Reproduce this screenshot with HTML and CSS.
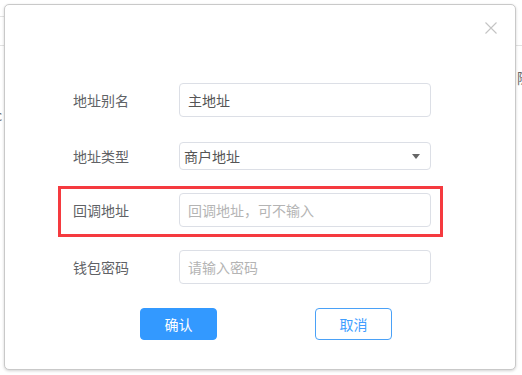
FILE: index.html
```html
<!DOCTYPE html>
<html lang="zh-CN">
<head>
<meta charset="utf-8">
<title>地址设置</title>
<link rel="stylesheet" href="styles.css">
</head>
<body>
<div class="backdrop">
  <div class="bg-line bg-line-a"></div>
  <div class="bg-line bg-line-b"></div>
  <div class="bg-row bg-row-a"><span class="bg-char">随</span></div>
  <div class="bg-row bg-row-b"><span class="bg-char bg-left">c</span></div>
</div>

<div class="dialog">
  <div class="dialog-header">
    <button class="close" aria-label="关闭">
      <svg width="12" height="12" viewBox="0 0 12 12"><path d="M0.5 0.5 L11.5 11.5 M11.5 0.5 L0.5 11.5" stroke="#c4c4c4" stroke-width="1.1" fill="none"/></svg>
    </button>
  </div>
  <div class="form">
    <div class="row">
      <label class="label">地址别名</label>
      <div class="input value">主地址</div>
    </div>
    <div class="row row-select">
      <label class="label">地址类型</label>
      <div class="select"><span class="value">商户地址</span><span class="caret"></span></div>
    </div>
    <div class="highlight">
      <div class="row">
        <label class="label">回调地址</label>
        <div class="input placeholder">回调地址，可不输入</div>
      </div>
    </div>
    <div class="row row-last">
      <label class="label">钱包密码</label>
      <div class="input placeholder">请输入密码</div>
    </div>
    <div class="actions">
      <button class="btn btn-primary">确认</button>
      <button class="btn btn-outline">取消</button>
    </div>
  </div>
</div>
</body>
</html>
```

FILE: styles.css
```css
* { box-sizing: border-box; }

html, body {
  margin: 0;
  padding: 0;
}

body {
  width: 522px;
  height: 375px;
  overflow: hidden;
  position: relative;
  background: #ffffff;
  font-family: "Noto Sans CJK SC", "Noto Sans", "Liberation Sans", sans-serif;
  font-size: 14px;
  color: #606266;
}

/* page behind the dialog */
.backdrop {
  height: 375px;
  display: flex;
  flex-direction: column;
}

.bg-line {
  height: 1px;
  background: #e2e2e2;
}
.bg-line-a { margin-top: 16px; width: 6px; }
.bg-line-b { margin-top: 28px; }

.bg-row {
  display: flex;
  height: 20px;
  line-height: 20px;
  color: #666;
  font-size: 14px;
}
.bg-row-a { margin-top: 21px; justify-content: flex-end; margin-right: -9px; }
.bg-row-b { margin-top: 18px; margin-left: -5px; }

/* modal */
.dialog {
  position: absolute;
  left: 4px;
  top: 4px;
  width: 512px;
  height: 366px;
  background: #fff;
  border: 1px solid #c9c9c9;
  border-radius: 5px;
  box-shadow: 0 1px 3px rgba(0, 0, 0, 0.18);
}

.dialog-header {
  display: flex;
  justify-content: flex-end;
  padding: 17px 18px 0 0;
}

.close {
  display: block;
  width: 12px;
  height: 12px;
  padding: 0;
  border: 0;
  background: none;
}
.close svg { display: block; }

.form {
  margin-top: 49px;
  padding-left: 68px;
  width: 426px;
}

.row {
  display: flex;
  align-items: center;
  height: 34px;
}

.label {
  width: 106px;
  flex: none;
  color: #606266;
  line-height: 20px;
}

.input {
  width: 252px;
  height: 34px;
  border: 1px solid #dcdfe6;
  border-radius: 4px;
  padding-left: 8px;
  display: flex;
  align-items: center;
  line-height: 20px;
}

.value { color: #555; }
.placeholder { color: #b4b4b4; }

.row-select {
  margin-top: 23px;
  height: 30px;
  align-items: flex-end;
}
.row-select .label { align-self: center; margin-top: 2px; }

.select {
  width: 252px;
  height: 28px;
  border: 1px solid #dcdfe6;
  border-radius: 4px;
  padding: 0 10px 0 4px;
  display: flex;
  align-items: center;
  justify-content: space-between;
  line-height: 20px;
}

.caret {
  width: 0;
  height: 0;
  border-left: 4px solid transparent;
  border-right: 4px solid transparent;
  border-top: 5px solid #666;
  margin-top: 1px;
}

.highlight {
  margin: 16px -12px 0 -15px;
  padding: 4px 9px 7px 12px;
  border: 3px solid #f53a3f;
}

.row-last { margin-top: 13px; }

.actions {
  display: flex;
  margin-top: 24px;
  padding-left: 67px;
  gap: 98px;
}

.btn {
  width: 77px;
  height: 32px;
  border-radius: 4px;
  font-family: inherit;
  font-size: 14px;
  padding: 0;
  line-height: 30px;
}

.btn-primary {
  background: #3399ff;
  border: 1px solid #3399ff;
  color: #fff;
}

.btn-outline {
  background: #fff;
  border: 1px solid #4aa1f7;
  color: #409eff;
}
```
